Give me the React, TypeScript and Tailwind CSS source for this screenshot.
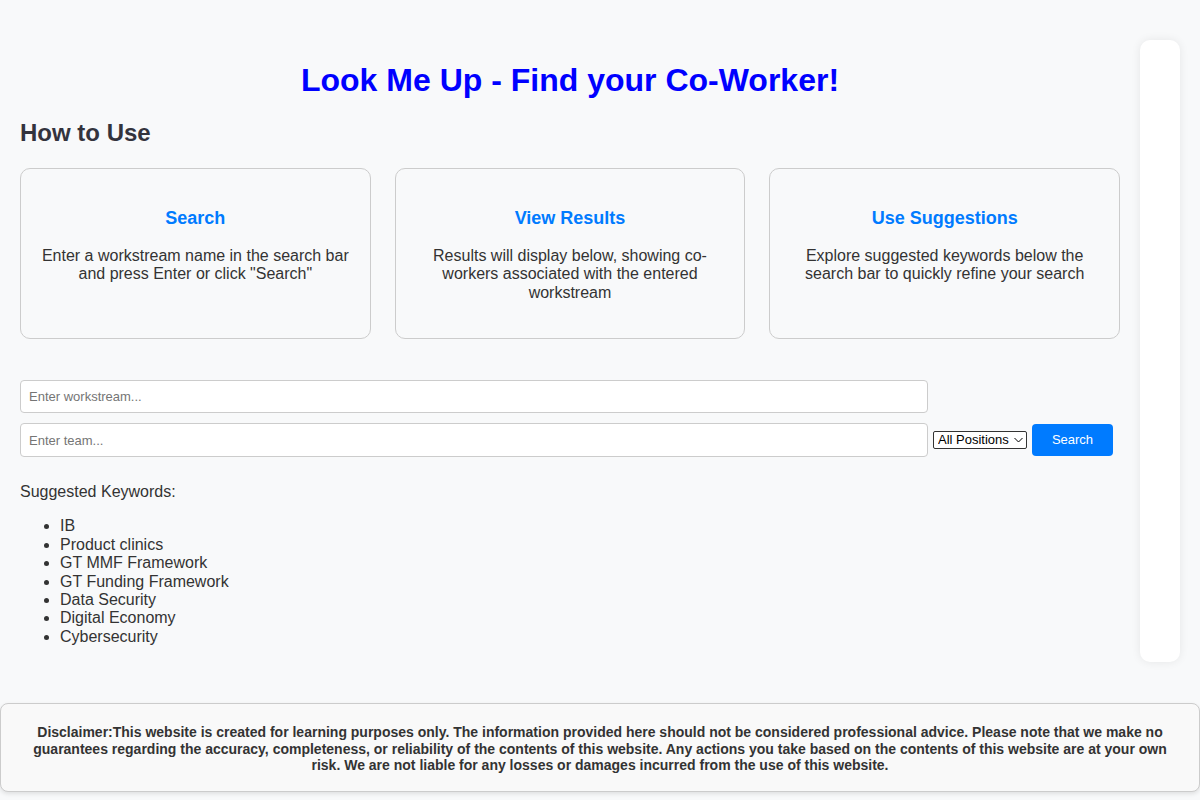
import { useState } from 'react';

const steps = [
  {
    title: 'Search',
    text: 'Enter a workstream name in the search bar and press Enter or click "Search"',
  },
  {
    title: 'View Results',
    text: 'Results will display below, showing co-workers associated with the entered workstream',
  },
  {
    title: 'Use Suggestions',
    text: 'Explore suggested keywords below the search bar to quickly refine your search',
  },
];

const keywords = [
  'IB',
  'Product clinics',
  'GT MMF Framework',
  'GT Funding Framework',
  'Data Security',
  'Digital Economy',
  'Cybersecurity',
];

export default function App() {
  const [workstream, setWorkstream] = useState('');
  const [team, setTeam] = useState('');
  const [position, setPosition] = useState('all');

  return (
    <div className="min-h-screen w-[1200px] bg-[#f8f9fa] font-['Liberation_Sans',Arial,sans-serif] text-[#333]">
      <div className="flex items-start pb-[41px]">
        <main className="flex-1 px-5 pt-[62px]">
          <h1 className="text-center text-[32px] font-bold leading-[37px] text-[#0000ff]">
            Look Me Up - Find your Co-Worker!
          </h1>
          <h2 className="mt-[20px] text-[24px] font-bold leading-[28px] text-[#33333d]">How to Use</h2>

          <div className="mt-[21px] grid grid-cols-3 gap-6">
            {steps.map((s) => (
              <div
                key={s.title}
                className="h-[171px] rounded-[10px] border border-[#cccccc] px-5 pt-[39px] text-center"
              >
                <h3 className="text-[18px] font-bold leading-[21px] text-[#007bff]">{s.title}</h3>
                <p className="mt-[18px] text-[16px] leading-[18.4px]">{s.text}</p>
              </div>
            ))}
          </div>

          <div className="mt-[41px] flex flex-col gap-[10px]">
            <input
              type="text"
              value={workstream}
              onChange={(e) => setWorkstream(e.target.value)}
              placeholder="Enter workstream..."
              className="h-[33px] w-[908px] rounded-[4px] border border-[#cccccc] bg-white px-2 text-[13px] text-[#333] placeholder-[#757575] focus:outline-none"
            />
            <div className="flex items-center">
              <input
                type="text"
                value={team}
                onChange={(e) => setTeam(e.target.value)}
                placeholder="Enter team..."
                className="h-[34px] w-[908px] rounded-[4px] border border-[#cccccc] bg-white px-2 text-[13px] text-[#333] placeholder-[#757575] focus:outline-none"
              />
              <div className="relative ml-[5px] h-[18px] w-[94px]">
                <select
                  value={position}
                  onChange={(e) => setPosition(e.target.value)}
                  className="block h-[18px] w-full appearance-none rounded-[2px] border border-[#333] bg-white py-0 pl-[4px] text-[13px] leading-[16px] text-black"
                >
                  <option value="all">All Positions</option>
                  <option value="manager">Manager</option>
                  <option value="analyst">Analyst</option>
                </select>
                <svg
                  className="pointer-events-none absolute right-[4px] top-[6px]"
                  width="9"
                  height="6"
                  viewBox="0 0 9 6"
                  fill="none"
                  stroke="#000"
                  strokeWidth="1"
                >
                  <path d="M0.5 1l4 4 4-4" />
                </svg>
              </div>
              <button className="ml-[5px] h-[32px] w-[81px] rounded-[4px] bg-[#007bff] text-[13px] text-white">
                Search
              </button>
            </div>
          </div>

          <p className="mt-[26px] text-[16px] leading-[18.4px]">Suggested Keywords:</p>
          <ul className="mt-[16px] list-disc pl-10 text-[16px] leading-[18.4px]">
            {keywords.map((k) => (
              <li key={k}>{k}</li>
            ))}
          </ul>
        </main>

        <aside className="mr-5 mt-[40px] h-[622px] w-[40px] rounded-[10px] bg-white shadow-[0_0_10px_rgba(0,0,0,0.08)]" />
      </div>

      <footer className="mb-[7px] rounded-lg border border-[#cccccc] bg-[#f9f9f9] px-[30px] pb-[17px] pt-5 text-center text-[14px] font-bold leading-[16.5px] text-[#333] shadow-[0_2px_4px_rgba(0,0,0,0.1)]">
        Disclaimer:This website is created for learning purposes only. The information provided here should not be
        considered professional advice. Please note that we make no guarantees regarding the accuracy, completeness, or
        reliability of the contents of this website. Any actions you take based on the contents of this website are at
        your own risk. We are not liable for any losses or damages incurred from the use of this website.
      </footer>
    </div>
  );
}
